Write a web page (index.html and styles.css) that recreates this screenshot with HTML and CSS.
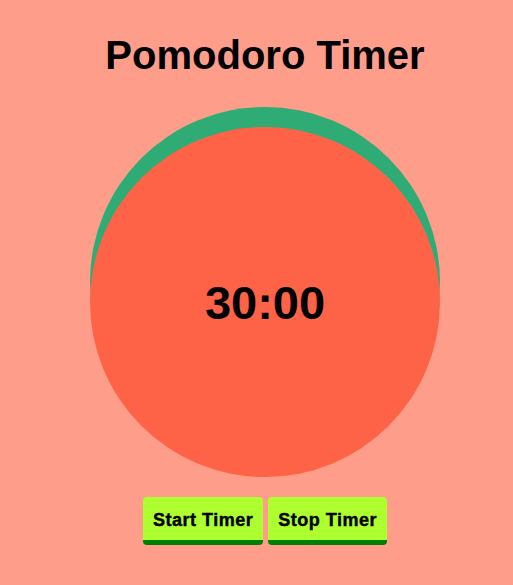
FILE: index.html
```html
<!DOCTYPE html>
<html>
<head>
<meta charset="utf-8">
<link rel="stylesheet" href="styles.css">
</head>
<body>
<div class="app">
  <h1 class="title">Pomodoro Timer</h1>
  <div class="dial">
    <div class="ring"></div>
    <div class="face"><span class="time">30:00</span></div>
  </div>
  <div class="controls">
    <button class="btn">Start Timer</button>
    <button class="btn">Stop Timer</button>
  </div>
</div>
</body>
</html>
```
FILE: styles.css
```css
html, body {
  margin: 0;
  padding: 0;
  background: #ff9d8b;
}
body {
  font-family: "Liberation Sans", Arial, sans-serif;
}
.app {
  display: flex;
  flex-direction: column;
  align-items: center;
  padding: 32px 0 0 17px;
}
.title {
  margin: 0;
  font-size: 40px;
  line-height: 46px;
  font-weight: bold;
  color: #000;
}
.dial {
  margin-top: 29px;
  width: 350px;
  height: 370px;
  display: grid;
}
.ring, .face {
  grid-area: 1 / 1;
  width: 350px;
  height: 350px;
  border-radius: 50%;
}
.ring {
  align-self: start;
  background: #2fac75;
}
.face {
  align-self: end;
  background: #ff6347;
  display: flex;
  align-items: center;
  justify-content: center;
}
.time {
  font-size: 47px;
  font-weight: bold;
  color: #000;
  line-height: 1;
}
.controls {
  margin-top: 20px;
  display: flex;
  gap: 5px;
}
.btn {
  font-family: "Liberation Sans", Arial, sans-serif;
  font-size: 18px;
  font-weight: bold;
  letter-spacing: 0.5px;
  -webkit-text-stroke: 0.4px #000;
  color: #000;
  background: #adff2f;
  border: none;
  border-bottom: 5px solid #008000;
  border-radius: 4px;
  padding: 12px 10px 9px;
  line-height: 22px;
}
```
